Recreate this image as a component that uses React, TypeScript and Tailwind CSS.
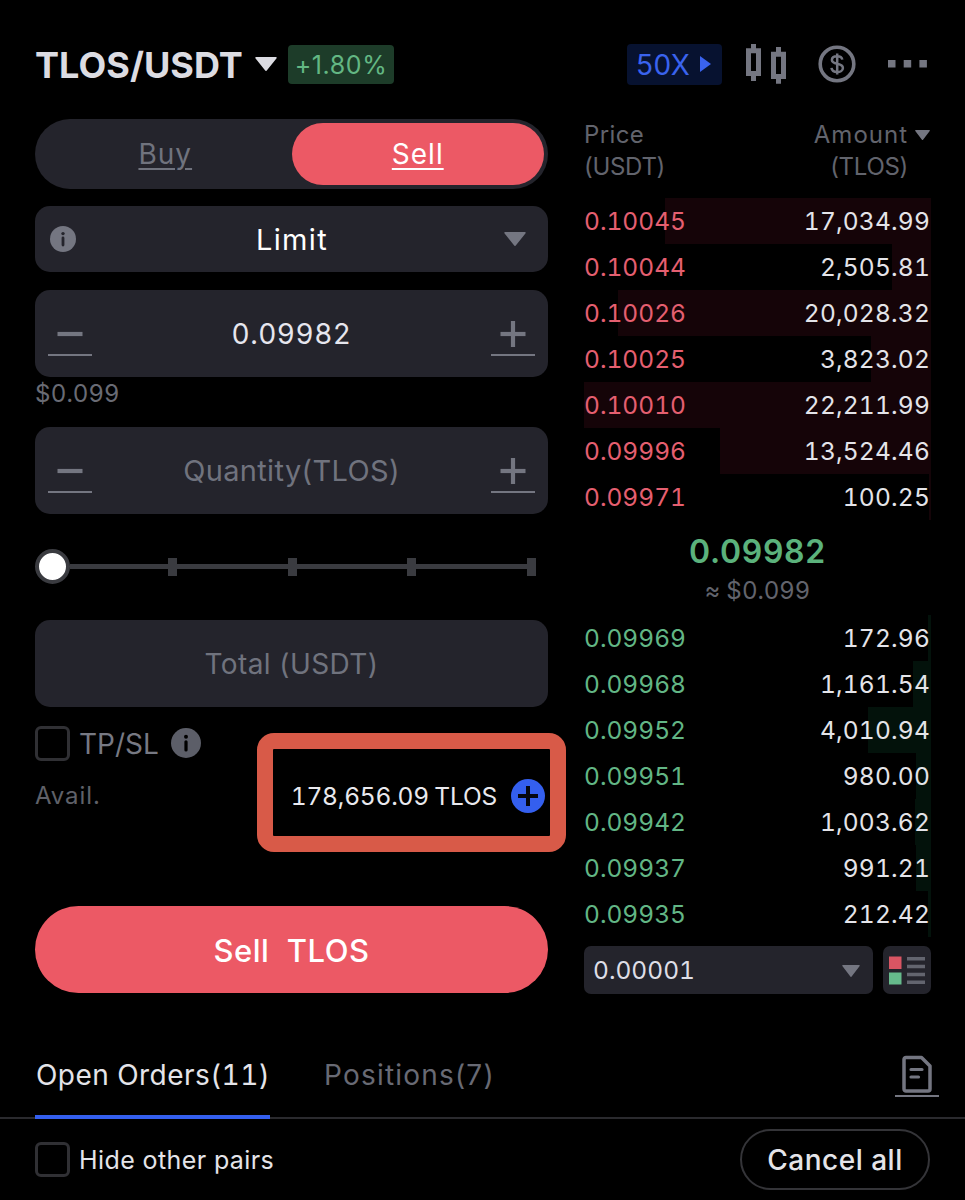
import { useState } from 'react'
import clsx from 'clsx'

interface Order {
  price: string
  amount: string
}

const ASKS: Order[] = [
  { price: '0.10045', amount: '17,034.99' },
  { price: '0.10044', amount: '2,505.81' },
  { price: '0.10026', amount: '20,028.32' },
  { price: '0.10025', amount: '3,823.02' },
  { price: '0.10010', amount: '22,211.99' },
  { price: '0.09996', amount: '13,524.46' },
  { price: '0.09971', amount: '100.25' },
]

const BIDS: Order[] = [
  { price: '0.09969', amount: '172.96' },
  { price: '0.09968', amount: '1,161.54' },
  { price: '0.09952', amount: '4,010.94' },
  { price: '0.09951', amount: '980.00' },
  { price: '0.09942', amount: '1,003.62' },
  { price: '0.09937', amount: '991.21' },
  { price: '0.09935', amount: '212.42' },
]

const toNumber = (value: string) => Number(value.replace(/,/g, ''))
const MAX_AMOUNT = Math.max(...[...ASKS, ...BIDS].map((o) => toNumber(o.amount)))

function Caret({ className }: { className?: string }) {
  return (
    <svg viewBox="0 0 22 14" className={className} fill="currentColor" preserveAspectRatio="none">
      <path d="M1 0h20a.8.8 0 0 1 .6 1.3l-9.8 12.2a1 1 0 0 1-1.6 0L.4 1.3A.8.8 0 0 1 1 0z" />
    </svg>
  )
}

function InfoIcon({ className, dot }: { className?: string; dot: string }) {
  return (
    <svg viewBox="0 0 26 26" className={className}>
      <circle cx="13" cy="13" r="13" fill="currentColor" />
      <circle cx="13" cy="7.6" r="1.7" fill={dot} />
      <path d="M13 12v7" stroke={dot} strokeWidth="2.8" strokeLinecap="round" />
    </svg>
  )
}

function Checkbox() {
  return <span className="size-[35px] shrink-0 rounded-[6px] border-[3px] border-[#303034]" />
}

function Header() {
  return (
    <header className="flex h-[42px] items-center pr-[4px]">
      <h1 className="w-[220px] pt-px text-[36px] font-bold tracking-[0.05px] text-[#dcdce2]">TLOS/USDT</h1>
      <Caret className="h-[14px] w-[22px] text-[#dcdce2]" />
      <span className="ml-[11px] flex h-[39px] w-[106px] items-center justify-center rounded-[4px] bg-[#1d3c29] pt-[3px] text-[25px] tracking-[0.6px] text-[#63b783]">
        +1.80%
      </span>
      <div className="ml-auto flex items-center text-[#747681]">
        <span className="flex h-[41px] w-[95px] items-center rounded-[4px] bg-[#071230] pl-[9px] text-[28px] tracking-[0.5px] text-[#3a63ee]">
          <span className="w-[64px] pt-[2px]">50X</span>
          <svg viewBox="0 0 11 16" className="h-4 w-[11px]" fill="currentColor">
            <path d="M0 0l11 8-11 8z" />
          </svg>
        </span>
        <svg viewBox="0 0 41 40" className="ml-6 h-10 w-[41px]" fill="none" stroke="currentColor">
          <path d="M2.5 6.8h10v22.7h-10z" strokeWidth="5" />
          <path d="M27.5 10.2h10v22.3h-10z" strokeWidth="5" />
          <path d="M7.5 0v6M7.5 31v6M32.5 3v6M32.5 34v5.7" strokeWidth="5" />
        </svg>
        <svg viewBox="0 0 38 38" className="ml-[31px] size-[38px]" fill="none" stroke="currentColor">
          <circle cx="19" cy="19" r="16.8" strokeWidth="3.6" />
          <path
            d="M24.3 14.6c-.4-2.3-2.5-3.4-5.2-3.4-3 0-5.2 1.4-5.2 3.7 0 5.3 11 2.4 11 8 0 2.5-2.5 4.1-5.7 4.1-3.2 0-5.4-1.5-5.7-4.1M19.2 8.5v21"
            strokeWidth="2.5"
          />
        </svg>
        <svg viewBox="0 0 39 8" className="ml-8 h-2 w-[39px]" fill="currentColor">
          <path d="M0 0h7.5v7.5H0zM15.7 0h7.5v7.5h-7.5zM31.4 0h7.5v7.5h-7.5z" />
        </svg>
      </div>
    </header>
  )
}

function StepButton({ plus }: { plus?: boolean }) {
  return (
    <button className="mt-[1px] flex h-[43px] w-[44px] shrink-0 items-center justify-center border-b-2 border-[#747681] text-[#747681]">
      <svg viewBox="0 0 26 26" className="mt-[1px] size-[26px]" stroke="currentColor" strokeWidth="4.2">
        <path d="M.5 13h25" />
        {plus && <path d="M13 0v26" />}
      </svg>
    </button>
  )
}

function StepperField({ value, placeholder }: { value?: string; placeholder?: string }) {
  return (
    <div className="flex h-[87px] items-center justify-between rounded-[15px] bg-[#24242c] px-[13px]">
      <StepButton />
      {value ? (
        <span className="pt-[1px] text-[28px] tracking-[0.5px] text-[#e6e6ee] tabular-nums">{value}</span>
      ) : (
        <span className="pt-[1px] text-[29px] tracking-[0.35px] text-[#70737e]">{placeholder}</span>
      )}
      <StepButton plus />
    </div>
  )
}

function Slider() {
  return (
    <div className="mt-[35px] flex h-[35px] items-center pr-[12px]">
      <span className="size-[35px] shrink-0 rounded-full border-4 border-[#3a3b40] bg-white" />
      {[0, 1, 2, 3].map((step) => (
        <span key={step} className={clsx('flex items-center', step === 0 ? 'w-[107px]' : 'flex-1')}>
          <span className="h-[5px] flex-1 bg-[#3a3b40]" />
          <span className="h-[18px] w-[9px] bg-[#3a3b40]" />
        </span>
      ))}
    </div>
  )
}

function OrderForm() {
  const [side, setSide] = useState<'buy' | 'sell'>('sell')

  return (
    <section className="flex w-[513px] flex-col">
      <div className="flex h-[70px] items-center rounded-full bg-[#24242c] p-[4px] text-[28px] tracking-[1px]">
        {(['buy', 'sell'] as const).map((s) => (
          <button
            key={s}
            onClick={() => setSide(s)}
            className={clsx(
              'h-[62px] w-[253px] rounded-full capitalize underline decoration-2 underline-offset-[4px]',
              side === s ? 'bg-[#ec5965] text-white' : 'text-[#70737e]',
            )}
          >
            {s}
          </button>
        ))}
      </div>

      <div className="mt-[17px] flex h-[66px] items-center justify-between rounded-[15px] bg-[#24242c] pr-[22px] pl-[15px] text-[#747681]">
        <InfoIcon className="size-[26px]" dot="#24242c" />
        <span className="pt-[2px] pl-[4px] text-[29px] tracking-[1.3px] text-white">Limit</span>
        <Caret className="h-[14px] w-[22px]" />
      </div>

      <div className="mt-[18px]">
        <StepperField value="0.09982" />
      </div>
      <p className="flex h-[50px] items-start pt-[1px] text-[24px] leading-[32px] tracking-[0.6px] text-[#696b74]">$0.099</p>
      <StepperField placeholder="Quantity(TLOS)" />

      <Slider />

      <div className="mt-[36px] flex h-[87px] items-center justify-center rounded-[15px] bg-[#24242c] pt-[1px] text-[28px] tracking-[0.4px] text-[#70737e]">
        Total (USDT)
      </div>

      <div className="mt-[18px] flex h-[36px] items-center">
        <Checkbox />
        <span className="ml-[9px] w-[92px] pt-[2px] text-[28px] text-[#777983]">TP/SL</span>
        <InfoIcon className="size-[30px] text-[#5c5e68]" dot="#000" />
      </div>

      <div className="relative mt-[15px] flex h-[40px] items-center pr-[3px]">
        <span className="text-[24px] tracking-[0.9px] text-[#5f6169]">Avail.</span>
        <span className="ml-auto text-[24.5px] tracking-[-0.2px] [word-spacing:-1px] text-[#e9e9ee] tabular-nums">
          178,656.09 TLOS
        </span>
        <svg viewBox="0 0 34 34" className="ml-[14px] size-[34px]">
          <circle cx="17" cy="17" r="17" fill="#345fee" />
          <path d="M7 17h20M17 7v20" stroke="#05070f" strokeWidth="4" />
        </svg>
        {/* highlight frame around the available balance */}
        <div className="pointer-events-none absolute -top-[43px] -right-[18px] h-[119px] w-[309px] rounded-[17px] border-[16px] border-[#d85a48]" />
      </div>

      <button className="mt-[90px] h-[87px] rounded-full bg-[#ec5965] pt-[3px] text-[31px] font-medium tracking-[0.5px] whitespace-pre text-white">
        Sell  TLOS
      </button>
    </section>
  )
}

function OrderRow({ order, side }: { order: Order; side: 'ask' | 'bid' }) {
  const depth = (toNumber(order.amount) / MAX_AMOUNT) * 100

  return (
    <div className="relative flex h-[46px] items-center justify-between text-[24.5px] leading-[46px] tabular-nums">
      <div
        className={clsx('absolute inset-y-0 right-0', side === 'ask' ? 'bg-[#150408]' : 'bg-[#03120b]')}
        style={{ width: `${depth}%` }}
      />
      <span className={clsx('relative', side === 'ask' ? 'text-[#e55f70]' : 'text-[#62b685]')}>{order.price}</span>
      <span className="relative pr-px tracking-[0.2px] text-[#e4e4e9]">{order.amount}</span>
    </div>
  )
}

function OrderBook() {
  return (
    <section className="flex w-[347px] flex-col">
      <div className="flex h-[79px] justify-between text-[24px] leading-[32px] text-[#62646d]">
        <div className="flex flex-col">
          <span className="tracking-[0.4px]">Price</span>
          <span className="tracking-[-0.3px]">(USDT)</span>
        </div>
        <div className="flex">
          <div className="flex flex-col items-end">
            <span className="tracking-[1px]">Amount</span>
            <span className="tracking-[-0.3px]">(TLOS)</span>
          </div>
          <Caret className="mt-[11px] mr-[1px] ml-[7px] h-[10px] w-[15px] text-[#747681]" />
        </div>
      </div>

      {ASKS.map((order) => (
        <OrderRow key={order.price} order={order} side="ask" />
      ))}

      <div className="flex h-[95px] flex-col items-center pt-[12px]">
        <span className="text-[32px] leading-[40px] font-semibold tracking-[0.7px] text-[#5bb27c]">0.09982</span>
        <span className="text-[24px] leading-[38px] tracking-[0.5px] [word-spacing:-2px] text-[#62646d]">≈ $0.099</span>
      </div>

      {BIDS.map((order) => (
        <OrderRow key={order.price} order={order} side="bid" />
      ))}

      <div className="mt-[9px] flex h-[48px] justify-between">
        <div className="flex w-[289px] items-center justify-between rounded-[7px] bg-[#24242c] pt-[1px] pr-[13px] pl-[9px] text-[24.5px] text-[#dedee6] tabular-nums">
          0.00001
          <Caret className="h-[12px] w-[18px] text-[#747681]" />
        </div>
        <svg viewBox="0 0 48 48" className="size-[48px]">
          <rect width="48" height="48" rx="7" fill="#24242c" />
          <path d="M6 10.5h12.5v12.5H6z" fill="#d95563" />
          <path d="M6 26.5h12.5v12H6z" fill="#66bb8c" />
          <path d="M24 12.8h18M24 20.5h18M24 28.5h18M24 36.3h18" stroke="#63656f" strokeWidth="3.5" />
        </svg>
      </div>
    </section>
  )
}

function OrdersPanel() {
  return (
    <section>
      <div className="flex h-[64px] border-b-2 border-[#2a2a2e] px-[35px] text-[28px] leading-[40px]">
        <div className="-mb-[2px] w-[235px] border-b-[4px] border-[#345fee] pl-px tracking-[0.45px] whitespace-nowrap text-[#e4e4e9] tabular-nums">
          Open Orders(11)
        </div>
        <div className="ml-[54px] tracking-[1.2px] text-[#686a74]">Positions(7)</div>
        <button className="-mr-[9px] ml-auto flex h-[42px] w-[44px] justify-center border-b-2 border-[#747681] text-[#747681]">
          <svg viewBox="0 0 30 38" className="h-[38px] w-[30px]" fill="none" stroke="currentColor" strokeLinejoin="round" strokeLinecap="round">
            <path d="M4 2.5h15.5l8.500 8.500v23a2 2 0 0 1-2 2H4a2 2 0 0 1-2-2v-29.500a2 2 0 0 1 2-2z" strokeWidth="3.5" />
            <path d="M9 14.5h11M9 22h7.5" strokeWidth="3.2" />
          </svg>
        </button>
      </div>

      <div className="flex h-[81px] items-center justify-between px-[35px]">
        <label className="flex items-center gap-[9px] text-[25px] tracking-[0.4px] text-[#e4e4e9]">
          <Checkbox />
          <span className="pt-[2px]">Hide other pairs</span>
        </label>
        <button className="h-[61px] w-[190px] rounded-full border-2 border-[#343438] text-[28px] font-medium tracking-[0.5px] text-[#e4e4e9]">
          Cancel all
        </button>
      </div>
      <div className="h-px bg-[#2a2a2e]" />
    </section>
  )
}

export default function App() {
  return (
    <div className="h-[1200px] w-[965px] overflow-hidden bg-black pt-[43px] font-['Inter',sans-serif]">
      <div className="pr-[34px] pl-[35px]">
        <Header />
        <main className="mt-[34px] flex justify-between">
          <OrderForm />
          <OrderBook />
        </main>
      </div>
      <div className="mt-[61px]">
        <OrdersPanel />
      </div>
    </div>
  )
}
